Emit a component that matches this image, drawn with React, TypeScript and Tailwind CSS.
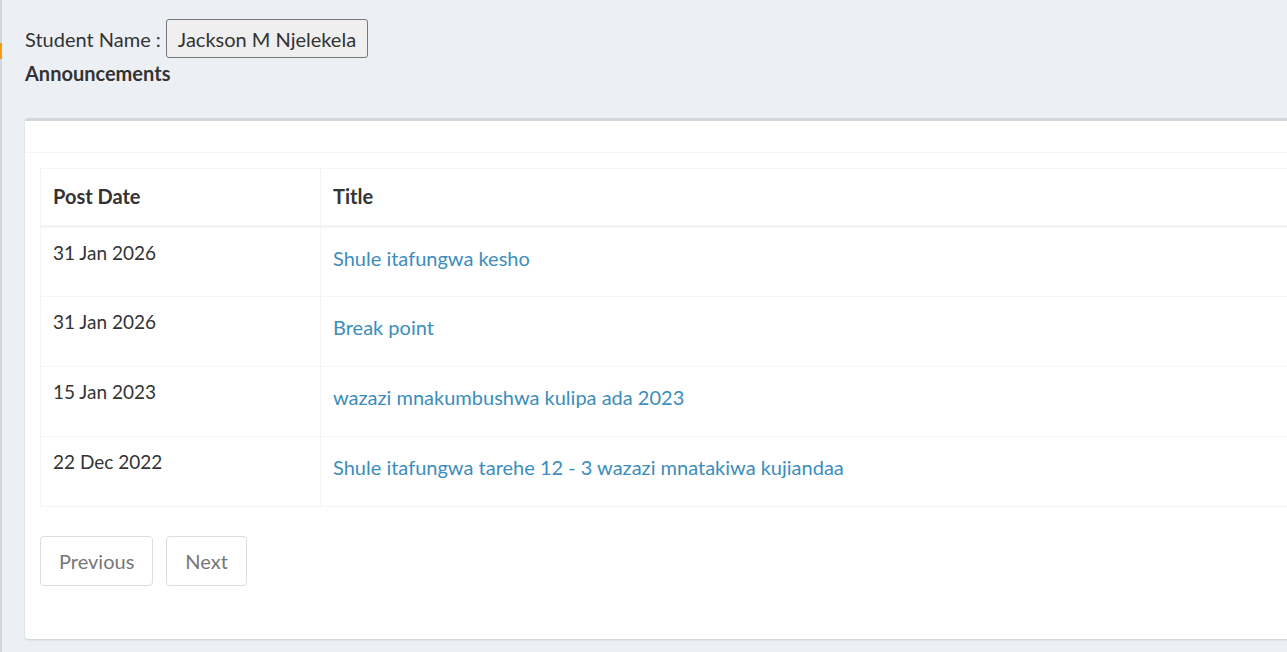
import React from 'react';

type Announcement = {
  date: string;
  title: string;
};

const announcements: Announcement[] = [
  {date: '31 Jan 2026', title: 'Shule itafungwa kesho'},
  {date: '31 Jan 2026', title: 'Break point'},
  {date: '15 Jan 2023', title: 'wazazi mnakumbushwa kulipa ada 2023'},
  {date: '22 Dec 2022', title: 'Shule itafungwa tarehe 12 - 3 wazazi mnatakiwa kujiandaa'},
];

const font = {fontFamily: '"Source Sans Pro", Lato, "Liberation Sans", sans-serif'};

const PageButton: React.FC<{label: string}> = ({label}) => (
  <button className="h-[50px] px-[18px] rounded border border-[#ddd] bg-white text-[20px] text-[#777]">
    {label}
  </button>
);

export default function App() {
  return (
    <div className="min-h-[652px] bg-[#ecf0f5] text-[#333] flex" style={font}>
      {/* sidebar edge */}
      <div className="w-[2px] shrink-0 bg-[#d2d6de] flex flex-col">
        <div className="mt-[43px] h-[16px] bg-[#f39c12]" />
      </div>

      <div className="flex-1 pl-[23px] pt-[19px]">
        <div className="flex items-center gap-[5px] text-[20px]">
          <span>Student Name :</span>
          <span className="h-[39px] px-[11px] flex items-center rounded-[3px] border border-[#777] bg-[#efefef]">
            Jackson M Njelekela
          </span>
        </div>
        <h3 className="mt-[2px] text-[20px] leading-[26px] font-bold">Announcements</h3>

        <div className="mt-[32px] w-[1280px] rounded-[3px] border-t-[3px] border-[#d2d6de] bg-white shadow-[0_1px_2px_rgba(0,0,0,0.15)]">
          <div className="h-[32px] border-b border-[#f4f4f4]" />
          <div className="px-[15px] pt-[15px] pb-[53px]">
            <table className="w-full border border-[#f4f4f4] border-collapse text-[19px]">
              <thead>
                <tr className="border-b-[3px] border-[#f4f4f4]">
                  <th className="w-[280px] h-[58px] px-[12px] pb-[2px] text-left text-[20px] font-bold border-r border-[#f4f4f4]">
                    Post Date
                  </th>
                  <th className="px-[12px] pb-[2px] text-left text-[20px] font-bold">Title</th>
                </tr>
              </thead>
              <tbody>
                {announcements.map((a, i) => (
                  <tr key={i} className="h-[70px] border-b border-[#f4f4f4]">
                    <td className="px-[12px] pt-[11px] align-top border-r border-[#f4f4f4]">{a.date}</td>
                    <td className="px-[12px] pt-[15px] align-top text-[20px]">
                      <a href="#" className="text-[#3c8dbc]">
                        {a.title}
                      </a>
                    </td>
                  </tr>
                ))}
              </tbody>
            </table>

            <div className="mt-[29px] flex gap-[13px]">
              <PageButton label="Previous" />
              <PageButton label="Next" />
            </div>
          </div>
        </div>
      </div>
    </div>
  );
}
